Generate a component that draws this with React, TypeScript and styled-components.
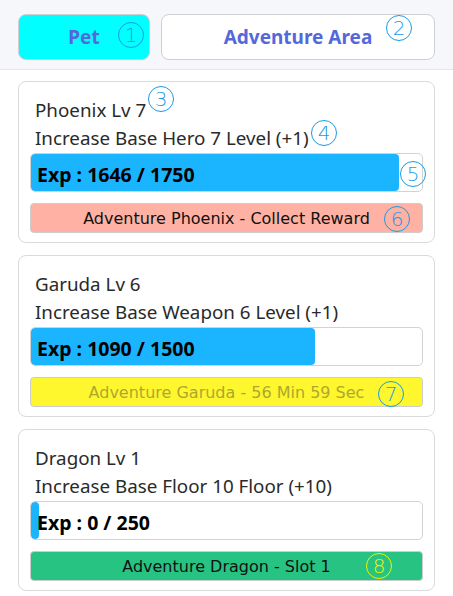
import styled, { createGlobalStyle } from "styled-components";

const GlobalStyle = createGlobalStyle`
  html, body {
    margin: 0;
    padding: 0;
    background: #ffffff;
  }
  body {
    font-family: "Noto Sans", "Open Sans", sans-serif;
    color: #222;
  }
`;

const Page = styled.div`
  position: relative;
  width: 453px;
  min-height: 596px;
`;

const Header = styled.div`
  display: flex;
  gap: 11px;
  padding: 14px 18px 9px;
  background-color: #f6f7fb;
  border-bottom: 1px solid #e4e6ee;
`;

const TabButton = styled.button<{ $active?: boolean; $width: number }>`
  width: ${(p) => p.$width}px;
  height: 46px;
  border: 1px solid #cfcfd4;
  border-radius: 8px;
  background-color: ${(p) => (p.$active ? "#00ffff" : "#ffffff")};
  color: #5468dc;
  font-family: "Noto Sans", sans-serif;
  font-weight: 700;
  font-size: 19px;
  cursor: pointer;
`;

const List = styled.div`
  display: flex;
  flex-direction: column;
  gap: 12px;
  padding: 11px 18px 0;
`;

const Card = styled.div`
  border: 1px solid #dadada;
  border-radius: 8px;
  padding: 14px 11px 9px;
  background: #fff;
`;

const Line = styled.div`
  padding-left: 5px;
  font-size: 18.8px;
  line-height: 28px;
  color: #2a2a2a;
`;

const Bar = styled.div`
  position: relative;
  height: 37px;
  margin-top: 1px;
  border: 1px solid #d2d2d2;
  border-radius: 5px;
  background: #fff;
  overflow: hidden;
`;

const Fill = styled.div`
  height: 100%;
  background-color: #1ab4ff;
  border-radius: 4px;
`;

const BarLabel = styled.span`
  position: absolute;
  left: 6px;
  top: 0;
  bottom: 0;
  display: flex;
  align-items: center;
  padding-top: 3px;
  font-weight: 700;
  font-size: 19.5px;
  color: #000;
`;

type Tone = "reward" | "wait" | "slot";

const tones: Record<Tone, { bg: string; fg: string }> = {
  reward: { bg: "#ffb1a3", fg: "#111" },
  wait: { bg: "#fef72e", fg: "#aea72e" },
  slot: { bg: "#27c382", fg: "#111" },
};

const ActionButton = styled.button<{ $tone: Tone }>`
  display: block;
  width: 100%;
  height: 30px;
  margin-top: 11px;
  border: 1px solid #cccccc;
  border-radius: 4px;
  background-color: ${(p) => tones[p.$tone].bg};
  color: ${(p) => tones[p.$tone].fg};
  font-family: "Comic Sans MS", "DejaVu Sans", sans-serif;
  font-size: 16px;
  cursor: pointer;
`;

const Mark = styled.span<{ $color?: string }>`
  position: absolute;
  width: 24px;
  height: 24px;
  margin: -12px 0 0 -12px;
  border: 1px solid ${(p) => p.$color || "#1a9be3"};
  border-radius: 50%;
  color: ${(p) => p.$color || "#1a9be3"};
  font-family: "DejaVu Sans", sans-serif;
  font-weight: 300;
  font-size: 20px;
  line-height: 24px;
  text-align: center;
  pointer-events: none;
`;

const pets = [
  {
    name: "Phoenix Lv 7",
    effect: "Increase Base Hero 7 Level (+1)",
    exp: 1646,
    max: 1750,
    action: "Adventure Phoenix - Collect Reward",
    tone: "reward" as Tone,
  },
  {
    name: "Garuda Lv 6",
    effect: "Increase Base Weapon 6 Level (+1)",
    exp: 1090,
    max: 1500,
    action: "Adventure Garuda - 56 Min 59 Sec",
    tone: "wait" as Tone,
  },
  {
    name: "Dragon Lv 1",
    effect: "Increase Base Floor 10 Floor (+10)",
    exp: 0,
    max: 250,
    action: "Adventure Dragon - Slot 1",
    tone: "slot" as Tone,
  },
];

const marks = [
  { n: 1, x: 130, y: 34 },
  { n: 2, x: 398, y: 27 },
  { n: 3, x: 160, y: 98 },
  { n: 4, x: 323, y: 132 },
  { n: 5, x: 412, y: 173 },
  { n: 6, x: 396, y: 218 },
  { n: 7, x: 390, y: 393 },
  { n: 8, x: 378, y: 565, color: "#f2f200" },
];

function App() {
  return (
    <Page>
      <GlobalStyle />
      <Header>
        <TabButton $active $width={132}>Pet</TabButton>
        <TabButton $width={274}>Adventure Area</TabButton>
      </Header>
      <List>
        {pets.map((p) => (
          <Card key={p.name}>
            <Line>{p.name}</Line>
            <Line>{p.effect}</Line>
            <Bar>
              <Fill style={{ width: `${Math.max((p.exp / p.max) * 100, 2)}%` }} />
              <BarLabel>
                Exp : {p.exp} / {p.max}
              </BarLabel>
            </Bar>
            <ActionButton $tone={p.tone} disabled={p.tone === "wait"}>
              {p.action}
            </ActionButton>
          </Card>
        ))}
      </List>
      {marks.map((m) => (
        <Mark key={m.n} $color={m.color} style={{ left: m.x, top: m.y }}>
          {m.n}
        </Mark>
      ))}
    </Page>
  );
}

export default App;
